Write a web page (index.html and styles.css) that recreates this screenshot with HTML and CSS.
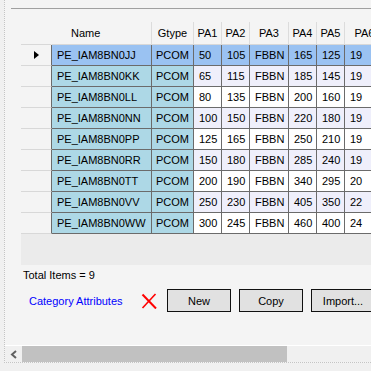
FILE: index.html
```html
<!DOCTYPE html>
<html>
<head>
<meta charset="utf-8">
<title>Category Attributes</title>
<link rel="stylesheet" href="styles.css">
</head>
<body>
<div class="frame">
  <div class="top-rule"></div>
  <div class="grid">
    <div class="row head">
      <div class="c rh"></div>
      <div class="c name hname">Name</div>
      <div class="c gtype">Gtype</div>
      <div class="c pa1">PA1</div>
      <div class="c pa2">PA2</div>
      <div class="c pa3">PA3</div>
      <div class="c pa4">PA4</div>
      <div class="c pa5">PA5</div>
      <div class="c pa6">PA6</div>
    </div>
    <div class="row body sel">
      <div class="c rh"><span class="arrow"></span></div>
      <div class="c name">PE_IAM8BN0JJ</div><div class="c gtype">PCOM</div>
      <div class="c pa1">50</div><div class="c pa2">105</div><div class="c pa3">FBBN</div>
      <div class="c pa4">165</div><div class="c pa5">125</div><div class="c pa6">19</div>
    </div>
    <div class="row body alt">
      <div class="c rh"></div>
      <div class="c name">PE_IAM8BN0KK</div><div class="c gtype">PCOM</div>
      <div class="c pa1">65</div><div class="c pa2">115</div><div class="c pa3">FBBN</div>
      <div class="c pa4">185</div><div class="c pa5">145</div><div class="c pa6">19</div>
    </div>
    <div class="row body">
      <div class="c rh"></div>
      <div class="c name">PE_IAM8BN0LL</div><div class="c gtype">PCOM</div>
      <div class="c pa1">80</div><div class="c pa2">135</div><div class="c pa3">FBBN</div>
      <div class="c pa4">200</div><div class="c pa5">160</div><div class="c pa6">19</div>
    </div>
    <div class="row body alt">
      <div class="c rh"></div>
      <div class="c name">PE_IAM8BN0NN</div><div class="c gtype">PCOM</div>
      <div class="c pa1">100</div><div class="c pa2">150</div><div class="c pa3">FBBN</div>
      <div class="c pa4">220</div><div class="c pa5">180</div><div class="c pa6">19</div>
    </div>
    <div class="row body">
      <div class="c rh"></div>
      <div class="c name">PE_IAM8BN0PP</div><div class="c gtype">PCOM</div>
      <div class="c pa1">125</div><div class="c pa2">165</div><div class="c pa3">FBBN</div>
      <div class="c pa4">250</div><div class="c pa5">210</div><div class="c pa6">19</div>
    </div>
    <div class="row body alt">
      <div class="c rh"></div>
      <div class="c name">PE_IAM8BN0RR</div><div class="c gtype">PCOM</div>
      <div class="c pa1">150</div><div class="c pa2">180</div><div class="c pa3">FBBN</div>
      <div class="c pa4">285</div><div class="c pa5">240</div><div class="c pa6">19</div>
    </div>
    <div class="row body">
      <div class="c rh"></div>
      <div class="c name">PE_IAM8BN0TT</div><div class="c gtype">PCOM</div>
      <div class="c pa1">200</div><div class="c pa2">190</div><div class="c pa3">FBBN</div>
      <div class="c pa4">340</div><div class="c pa5">295</div><div class="c pa6">20</div>
    </div>
    <div class="row body alt">
      <div class="c rh"></div>
      <div class="c name">PE_IAM8BN0VV</div><div class="c gtype">PCOM</div>
      <div class="c pa1">250</div><div class="c pa2">230</div><div class="c pa3">FBBN</div>
      <div class="c pa4">405</div><div class="c pa5">350</div><div class="c pa6">22</div>
    </div>
    <div class="row body">
      <div class="c rh"></div>
      <div class="c name">PE_IAM8BN0WW</div><div class="c gtype">PCOM</div>
      <div class="c pa1">300</div><div class="c pa2">245</div><div class="c pa3">FBBN</div>
      <div class="c pa4">460</div><div class="c pa5">400</div><div class="c pa6">24</div>
    </div>
  </div>
  <div class="total">Total Items = 9</div>
  <div class="actions">
    <span class="link">Category Attributes</span>
    <svg class="del" width="16" height="16" viewBox="0 0 16 16">
      <path d="M1.5 1.5 L15 15.5" stroke="#ff0000" stroke-width="2" fill="none"/>
      <path d="M14.5 1 L1.5 15" stroke="#ff0000" stroke-width="1.6" fill="none"/>
    </svg>
    <button class="btn">New</button>
    <button class="btn">Copy</button>
    <button class="btn">Import...</button>
  </div>
  <div class="hscroll">
    <div class="sb-btn">
      <svg width="8" height="9" viewBox="0 0 8 9"><path d="M6 1 L2 4.5 L6 8" stroke="#606060" stroke-width="2" fill="none"/></svg>
    </div>
    <div class="sb-thumb"></div>
  </div>
</div>
</body>
</html>
```

FILE: styles.css
```css
html, body {
  margin: 0;
  padding: 0;
  width: 371px;
  height: 371px;
  overflow: hidden;
  background: #f0f0f0;
  font-family: "Liberation Sans", Arial, sans-serif;
  font-size: 11px;
  color: #000;
}

.frame {
  margin-left: 4px;
  width: 366px;
  height: 362px;
  border-left: 1px dotted #c4c4c4;
  border-bottom: 1px dotted #c4c4c4;
  background: #f4f4f4;
  display: flex;
  flex-direction: column;
  overflow: hidden;
}

.top-rule {
  margin-top: 8px;
  margin-left: 6px;
  height: 1px;
  background: #a0a0a0;
  flex: none;
}

.grid {
  margin-top: 13px;
  margin-left: 16px;
  height: 243px;
  width: 364px;
  background: #ebebeb;
  flex: none;
}

.row {
  display: flex;
  height: 21px;
}

.c {
  flex: none;
  box-sizing: border-box;
  height: 100%;
  line-height: 20px;
  padding-left: 5px;
  white-space: nowrap;
  overflow: hidden;
  border-right: 1px solid #6b6b6b;
  border-bottom: 1px solid #6b6b6b;
}

.rh { width: 31px; padding-left: 13px; }
.name { width: 100px; }
.gtype { width: 42px; padding-left: 4px; }
.pa1 { width: 28px; }
.pa2 { width: 28px; }
.pa3 { width: 39px; }
.pa4 { width: 28px; }
.pa5 { width: 28px; }
.pa6 { width: 40px; }

.head {
  height: 23px;
}
.head .c {
  background: #f4f4f4;
  line-height: 22px;
  border-right-color: #dcdcdc;
  border-bottom-color: #d8d8d8;
  text-align: center;
  padding-left: 0;
}
.head .rh { border-right-color: #f4f4f4; }
.head .hname { text-align: left; padding-left: 19px; }

.body .rh {
  background: #f4f4f4;
  border-bottom-color: #d8d8d8;
  display: flex;
  align-items: center;
}

.body .c { background: #ffffff; }
.body.alt .c { background: #efeffb; }
.body .name, .body .gtype { background: #add8e6; }
.body.alt .name, .body.alt .gtype { background: #add8e6; }
.body.sel .c { background: #9ac2f2; }
.body .c.rh, .body.alt .c.rh, .body.sel .c.rh { background: #f4f4f4; }

.arrow {
  width: 0;
  height: 0;
  border-left: 5px solid #000;
  border-top: 4.5px solid transparent;
  border-bottom: 4.5px solid transparent;
}

.total {
  margin-top: 3px;
  margin-left: 18px;
  line-height: 14px;
  height: 14px;
  flex: none;
}

.actions {
  margin-top: 7px;
  margin-left: 24px;
  height: 23px;
  display: flex;
  align-items: center;
  flex: none;
}

.link {
  width: 112px;
  color: #0000ff;
  flex: none;
}

.del {
  flex: none;
  margin-right: 10px;
}

.btn {
  flex: none;
  width: 64px;
  height: 23px;
  margin: 0 8px 0 0;
  padding: 0;
  background: #e1e1e1;
  border: 1px solid #111;
  border-radius: 0;
  font-family: "Liberation Sans", Arial, sans-serif;
  font-size: 11px;
  color: #000;
}

.hscroll {
  margin-top: auto;
  height: 16px;
  border-top: 1px solid #ffffff;
  background: #f0f0f0;
  display: flex;
  flex: none;
}

.sb-btn {
  width: 17px;
  display: flex;
  align-items: center;
  justify-content: center;
  flex: none;
}

.sb-thumb {
  width: 265px;
  background: #c1c1c1;
  flex: none;
}
```
